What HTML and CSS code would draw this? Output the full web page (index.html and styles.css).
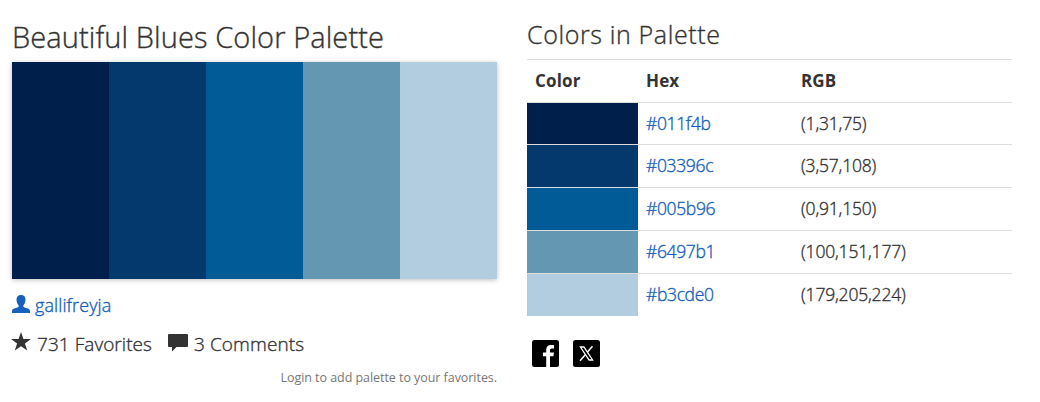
FILE: index.html
```html
<!DOCTYPE html>
<html lang="en">
<head>
<meta charset="utf-8">
<title>Beautiful Blues Color Palette</title>
<link rel="stylesheet" href="styles.css">
</head>
<body>
<main class="page">
  <section class="palette">
    <h1 class="title"><span>Beautiful Blues Color Palette</span></h1>
    <div class="swatches">
      <div class="c1"></div><div class="c2"></div><div class="c3"></div><div class="c4"></div><div class="c5"></div>
    </div>
    <a class="user" href="#">
      <svg class="icon-user" viewBox="0 0 18 18"><path d="M9 0C6 0 4.500 1.900 4.500 4.500C4.500 7.500 5.500 9 6.600 10.200V11.700C5.500 12.900 0 13.300 0 15.800V18H18V15.800C18 13.300 12.500 12.900 11.400 11.700V10.200C12.500 9 13.500 7.500 13.500 4.500C13.500 1.900 12 0 9 0Z"/></svg>
      <span class="name">gallifreyja</span>
    </a>
    <div class="stats">
      <svg class="icon-star" viewBox="0 0 20 19"><path d="M10 0L12.400 7H20L13.900 11.400L16.200 18.500L10 14.200L3.800 18.500L6.100 11.400L0 7H7.600Z"/></svg>
      <span class="favs">731 Favorites</span>
      <svg class="icon-comment" viewBox="0 0 20 18"><path d="M1 0H19Q20 0 20 1V12Q20 13 19 13H8.500L4 17.500V13H1Q0 13 0 12V1Q0 0 1 0Z"/></svg>
      <span class="comments">3 Comments</span>
    </div>
    <p class="login"><span>Login to add palette to your favorites.</span></p>
  </section>
  <section class="colors">
    <h2 class="subtitle"><span>Colors in Palette</span></h2>
    <table class="table">
      <thead><tr><th class="col-color"><span class="h-color">Color</span></th><th class="col-hex"><span>Hex</span></th><th><span>RGB</span></th></tr></thead>
      <tbody>
        <tr><td class="c1"></td><td><a href="#">#011f4b</a></td><td><span>(1,31,75)</span></td></tr>
        <tr><td class="c2"></td><td><a href="#">#03396c</a></td><td><span>(3,57,108)</span></td></tr>
        <tr><td class="c3"></td><td><a href="#">#005b96</a></td><td><span>(0,91,150)</span></td></tr>
        <tr><td class="c4"></td><td><a href="#">#6497b1</a></td><td><span>(100,151,177)</span></td></tr>
        <tr><td class="c5"></td><td><a href="#">#b3cde0</a></td><td><span>(179,205,224)</span></td></tr>
      </tbody>
    </table>
    <div class="share">
      <svg viewBox="0 0 27 27"><rect width="27" height="27" rx="2.500"/><path fill="#fff" d="M14.200 27V16.200H11V12.500H14.200V9.800C14.200 6.500 16 4.900 19 4.900H22V8.500H20C18.500 8.500 18 9.200 18 10.300V12.500H22L21.400 16.200H18V27Z"/></svg>
      <svg viewBox="0 0 27 27"><rect width="27" height="27" rx="2.500"/><path fill="none" stroke="#fff" stroke-width="1.300" d="M7.400 7H10.900L19.600 20H16.100Z"/><path fill="none" stroke="#fff" stroke-width="1.500" d="M19.500 6.300L14.300 12.300M12.500 14.500L7 20.700"/></svg>
    </div>
  </section>
</main>
</body>
</html>
```
FILE: styles.css
```css
* { box-sizing: border-box; }
body { margin: 0; background: #fff; color: #333; font: 300 18px "Open Sans", "Noto Sans", sans-serif; -webkit-text-stroke: .35px; }
a { color: #1560bd; text-decoration: none; }
h1, h2, p { margin: 0; font-weight: 300; white-space: nowrap; }
.page { display: grid; grid-template-columns: 485px 485px; column-gap: 30px; padding: 18px 12px 0; }
.title { font-size: 29px; line-height: 38px; height: 44px; letter-spacing: .1px; }
.subtitle { font-size: 25px; line-height: 33px; height: 41px; letter-spacing: .63px; }
.swatches { display: grid; grid-template-columns: repeat(5, 1fr); height: 217px; box-shadow: 0 1px 5px rgba(0, 0, 0, .25); }
.c1 { background: #011f4b; }
.c2 { background: #03396c; }
.c3 { background: #005b96; }
.c4 { background: #6497b1; }
.c5 { background: #b3cde0; }
svg { display: block; flex: none; }
.user { display: flex; height: 28px; margin-top: 13px; line-height: 27px; letter-spacing: .1px; }
.icon-user { width: 18px; height: 18px; margin: 3px 5px 0 0; fill: #1560bd; }
.stats { display: flex; height: 30px; margin-top: 9px; line-height: 30px; font-size: 19px; fill: #333; }
.icon-star { width: 20px; height: 19px; margin: 3px 6px 0 -1px; }
.favs { width: 131px; letter-spacing: .05px; }
.icon-comment { width: 20px; height: 18px; margin: 5px 6px 0 0; }
.comments { letter-spacing: .1px; }
.login { margin-top: 9px; text-align: right; font-size: 12.500px; font-weight: 400; line-height: 20px; letter-spacing: -.05px; color: #777; -webkit-text-stroke: 0; }
.table { width: 485px; table-layout: fixed; border-collapse: collapse; line-height: 25px; }
.table th, .table td { height: 43px; padding: 8px; border-top: 1px solid #ddd; text-align: left; vertical-align: top; }
.table th { font-weight: 700; font-size: 17px; letter-spacing: .15px; -webkit-text-stroke: 0; }
.table td { font-size: 17.500px; letter-spacing: -.18px; }
.table td a { letter-spacing: -.35px; }
.table tbody tr:first-child td { height: 42px; }
.table tbody tr:last-child td { height: 42px; padding-bottom: 7px; }
.col-color { width: 111px; }
.col-hex { width: 155px; }
.share { display: flex; gap: 14px; padding: 24px 5px 0; }
.share svg { width: 27px; height: 27px; }
```
